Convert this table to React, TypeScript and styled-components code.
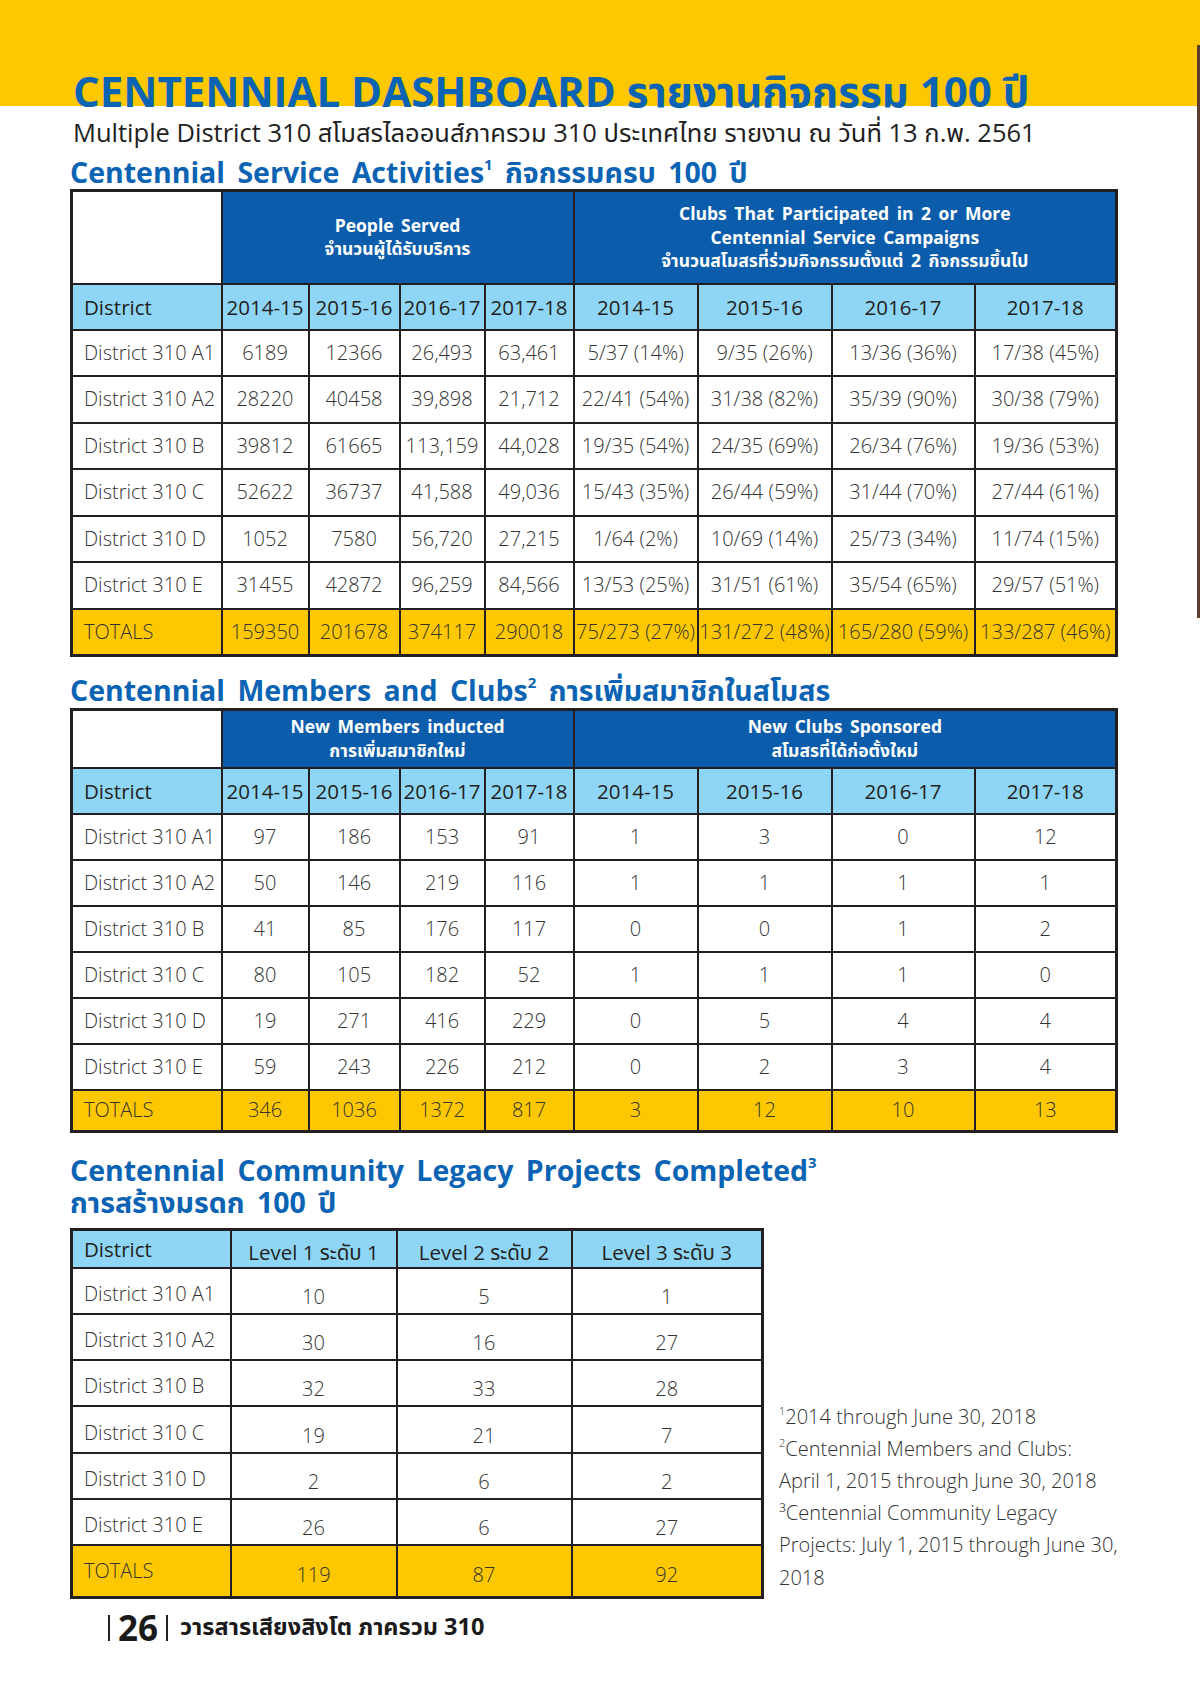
import React from "react";
import styled, { createGlobalStyle } from "styled-components";

const BLUE = "#0b63b3";
const NAVY = "#0b5dab";
const SKY = "#8fd6f6";
const GOLD = "#fdc800";
const LINE = "#231f20";
const FONT = `"Open Sans", "Noto Sans", "Noto Sans Thai", "Lato", sans-serif`;

const GlobalStyle = createGlobalStyle`
  html, body { margin: 0; padding: 0; background: #ffffff; }
  body { font-family: ${FONT}; color: #2e2e2e; }
`;

const Page = styled.div`
  width: 1200px;
  height: 1696px;
  overflow: hidden;
  background:
    linear-gradient(#5b3d2f, #5b3d2f) no-repeat right 0 top 45px / 3px 573px,
    linear-gradient(${GOLD}, ${GOLD}) no-repeat left top / 100% 106px,
    #ffffff;
`;

const Masthead = styled.header`
  padding: 69px 0 0 73px;
`;

const Title = styled.h1`
  margin: 0;
  font-family: ${FONT};
  font-weight: 700;
  font-size: 42px;
  line-height: 44px;
  color: ${BLUE};
  white-space: nowrap;
`;

const Subtitle = styled.p`
  margin: 4px 0 0;
  font-size: 25.5px;
  line-height: 30px;
  color: #1f1f1f;
  white-space: nowrap;
`;

const Main = styled.main`
  padding-left: 70px;
  width: 1045px;
`;

const SectionTitle = styled.h2<{ $mt: number; $mb: number; $lh: number }>`
  margin: ${(p) => p.$mt}px 0 ${(p) => p.$mb}px;
  font-weight: 700;
  font-size: 28.5px;
  line-height: ${(p) => p.$lh}px;
  color: ${BLUE};
  word-spacing: 5px;
  white-space: nowrap;
  sup {
    font-size: 15px;
    line-height: 0;
    vertical-align: 13px;
  }
`;

const Table = styled.table<{ $w: number }>`
  border-collapse: collapse;
  table-layout: fixed;
  width: ${(p) => p.$w}px;
  border: 3px solid ${LINE};
`;

const Col = styled.col<{ $w: number }>`
  width: ${(p) => p.$w}px;
`;

const Row = styled.tr<{ $h: number; $tone?: "sky" | "gold" | "white" }>`
  height: ${(p) => p.$h}px;
  background: ${(p) => (p.$tone === "sky" ? SKY : p.$tone === "gold" ? GOLD : "#ffffff")};
`;

const GroupHead = styled.th`
  background: ${NAVY};
  color: #ffffff;
  font-weight: 700;
  font-size: 17.5px;
  line-height: 23.5px;
  word-spacing: 3px;
  text-align: center;
  border: 2px solid ${LINE};
  padding: 0 4px;
`;

const BlankHead = styled.th`
  background: #ffffff;
  border: 2px solid ${LINE};
`;

const SubHead = styled.th<{ $lead?: boolean; $drop?: number }>`
  border: 2px solid ${LINE};
  font-weight: 400;
  font-size: 20.5px;
  line-height: 26px;
  color: ${LINE};
  white-space: nowrap;
  text-align: ${(p) => (p.$lead ? "left" : "center")};
  padding: ${(p) => p.$drop ?? 0}px 0 0 ${(p) => (p.$lead ? 11 : 0)}px;
`;

const Cell = styled.td<{ $lead?: boolean; $drop?: number }>`
  border: 2px solid ${LINE};
  font-weight: 300;
  font-size: 20px;
  line-height: 26px;
  color: #333333;
  white-space: nowrap;
  text-align: ${(p) => (p.$lead ? "left" : "center")};
  padding: ${(p) => p.$drop ?? 0}px 0 0 ${(p) => (p.$lead ? 11 : 0)}px;
`;

const LegacyRow = styled.div`
  display: flex;
  align-items: flex-end;
  width: 1130px;
`;

const Notes = styled.div`
  margin-left: 15px;
  padding-bottom: 5px;
  font-weight: 300;
  font-size: 20px;
  line-height: 32.2px;
  color: #333333;
  sup {
    font-size: 11px;
    line-height: 0;
    vertical-align: 9px;
  }
`;

const Footer = styled.footer`
  display: flex;
  align-items: center;
  gap: 8px;
  margin: 9px 0 0 38px;
  height: 40px;
`;

const Bar = styled.span`
  width: 2px;
  height: 26px;
  background: #222222;
`;

const PageNo = styled.span`
  font-weight: 700;
  font-size: 35px;
  line-height: 40px;
  color: #1a1a1a;
`;

const Magazine = styled.span`
  margin-left: 4px;
  font-weight: 700;
  font-size: 23.5px;
  color: #1a1a1a;
`;

const YEARS = ["2014-15", "2015-16", "2016-17", "2017-18"];

const service: string[][] = [
  ["District 310 A1", "6189", "12366", "26,493", "63,461", "5/37 (14%)", "9/35 (26%)", "13/36 (36%)", "17/38 (45%)"],
  ["District 310 A2", "28220", "40458", "39,898", "21,712", "22/41 (54%)", "31/38 (82%)", "35/39 (90%)", "30/38 (79%)"],
  ["District 310 B", "39812", "61665", "113,159", "44,028", "19/35 (54%)", "24/35 (69%)", "26/34 (76%)", "19/36 (53%)"],
  ["District 310 C", "52622", "36737", "41,588", "49,036", "15/43 (35%)", "26/44 (59%)", "31/44 (70%)", "27/44 (61%)"],
  ["District 310 D", "1052", "7580", "56,720", "27,215", "1/64 (2%)", "10/69 (14%)", "25/73 (34%)", "11/74 (15%)"],
  ["District 310 E", "31455", "42872", "96,259", "84,566", "13/53 (25%)", "31/51 (61%)", "35/54 (65%)", "29/57 (51%)"],
];
const serviceTotals = ["TOTALS", "159350", "201678", "374117", "290018", "75/273 (27%)", "131/272 (48%)", "165/280 (59%)", "133/287 (46%)"];

const members: string[][] = [
  ["District 310 A1", "97", "186", "153", "91", "1", "3", "0", "12"],
  ["District 310 A2", "50", "146", "219", "116", "1", "1", "1", "1"],
  ["District 310 B", "41", "85", "176", "117", "0", "0", "1", "2"],
  ["District 310 C", "80", "105", "182", "52", "1", "1", "1", "0"],
  ["District 310 D", "19", "271", "416", "229", "0", "5", "4", "4"],
  ["District 310 E", "59", "243", "226", "212", "0", "2", "3", "4"],
];
const memberTotals = ["TOTALS", "346", "1036", "1372", "817", "3", "12", "10", "13"];

const legacy: string[][] = [
  ["District 310 A1", "10", "5", "1"],
  ["District 310 A2", "30", "16", "27"],
  ["District 310 B", "32", "33", "28"],
  ["District 310 C", "19", "21", "7"],
  ["District 310 D", "2", "6", "2"],
  ["District 310 E", "26", "6", "27"],
];
const legacyTotals = ["TOTALS", "119", "87", "92"];

const WIDE_COLS = [150, 87, 91, 85, 89, 124, 134, 143, 142];
const LEGACY_COLS = [159, 166, 175, 191];

function WideTable({
  headA,
  headB,
  headH,
  rows,
  totals,
  rowH,
  totalH,
}: {
  headA: React.ReactNode;
  headB: React.ReactNode;
  headH: number;
  rows: string[][];
  totals: string[];
  rowH: number;
  totalH: number;
}) {
  return (
    <Table $w={1045}>
      <colgroup>
        {WIDE_COLS.map((w, i) => (
          <Col key={i} $w={w} />
        ))}
      </colgroup>
      <thead>
        <Row $h={headH}>
          <BlankHead />
          <GroupHead colSpan={4}>{headA}</GroupHead>
          <GroupHead colSpan={4}>{headB}</GroupHead>
        </Row>
        <Row $h={46} $tone="sky">
          <SubHead $lead>District</SubHead>
          {[...YEARS, ...YEARS].map((y, i) => (
            <SubHead key={i}>{y}</SubHead>
          ))}
        </Row>
      </thead>
      <tbody>
        {rows.map((r) => (
          <Row key={r[0]} $h={rowH}>
            {r.map((c, i) => (
              <Cell key={i} $lead={i === 0}>
                {c}
              </Cell>
            ))}
          </Row>
        ))}
        <Row $h={totalH} $tone="gold">
          {totals.map((c, i) => (
            <Cell key={i} $lead={i === 0}>
              {c}
            </Cell>
          ))}
        </Row>
      </tbody>
    </Table>
  );
}

export default function App() {
  return (
    <>
      <GlobalStyle />
      <Page>
        <Masthead>
          <Title>CENTENNIAL DASHBOARD รายงานกิจกรรม 100 ปี</Title>
          <Subtitle>
            Multiple District 310 สโมสรไลออนส์ภาครวม 310 ประเทศไทย รายงาน ณ วันที่ 13 ก.พ. 2561
          </Subtitle>
        </Masthead>
        <Main>
          <SectionTitle $mt={8} $mb={0} $lh={34}>
            Centennial Service Activities<sup>1</sup> กิจกรรมครบ 100 ปี
          </SectionTitle>
          <WideTable
            headH={93}
            headA={
              <>
                People Served
                <br />
                จำนวนผู้ได้รับบริการ
              </>
            }
            headB={
              <>
                Clubs That Participated in 2 or More
                <br />
                Centennial Service Campaigns
                <br />
                จำนวนสโมสรที่ร่วมกิจกรรมตั้งแต่ 2 กิจกรรมขึ้นไป
              </>
            }
            rows={service}
            totals={serviceTotals}
            rowH={46.5}
            totalH={47}
          />
          <SectionTitle $mt={16} $mb={1} $lh={34}>
            Centennial Members and Clubs<sup>2</sup> การเพิ่มสมาชิกในสโมสร
          </SectionTitle>
          <WideTable
            headH={58}
            headA={
              <>
                New Members inducted
                <br />
                การเพิ่มสมาชิกใหม่
              </>
            }
            headB={
              <>
                New Clubs Sponsored
                <br />
                สโมสรที่ได้ก่อตั้งใหม่
              </>
            }
            rows={members}
            totals={memberTotals}
            rowH={46}
            totalH={42}
          />
          <SectionTitle $mt={21} $mb={10} $lh={32}>
            Centennial Community Legacy Projects Completed<sup>3</sup>
            <br />
            การสร้างมรดก 100 ปี
          </SectionTitle>
          <LegacyRow>
            <Table $w={691}>
              <colgroup>
                {LEGACY_COLS.map((w, i) => (
                  <Col key={i} $w={w} />
                ))}
              </colgroup>
              <thead>
                <Row $h={38} $tone="sky">
                  <SubHead $lead>District</SubHead>
                  <SubHead $drop={7}>Level 1 ระดับ 1</SubHead>
                  <SubHead $drop={7}>Level 2 ระดับ 2</SubHead>
                  <SubHead $drop={7}>Level 3 ระดับ 3</SubHead>
                </Row>
              </thead>
              <tbody>
                {legacy.map((r) => (
                  <Row key={r[0]} $h={46.3}>
                    {r.map((c, i) => (
                      <Cell key={i} $lead={i === 0} $drop={i === 0 ? 6 : 12}>
                        {c}
                      </Cell>
                    ))}
                  </Row>
                ))}
                <Row $h={52} $tone="gold">
                  {legacyTotals.map((c, i) => (
                    <Cell key={i} $lead={i === 0} $drop={i === 0 ? 0 : 8}>
                      {c}
                    </Cell>
                  ))}
                </Row>
              </tbody>
            </Table>
            <Notes>
              <sup>1</sup>2014 through June 30, 2018
              <br />
              <sup>2</sup>Centennial Members and Clubs:
              <br />
              April 1, 2015 through June 30, 2018
              <br />
              ³Centennial Community Legacy
              <br />
              Projects: July 1, 2015 through June 30,
              <br />
              2018
            </Notes>
          </LegacyRow>
          <Footer>
            <Bar />
            <PageNo>26</PageNo>
            <Bar />
            <Magazine>วารสารเสียงสิงโต ภาครวม 310</Magazine>
          </Footer>
        </Main>
      </Page>
    </>
  );
}
